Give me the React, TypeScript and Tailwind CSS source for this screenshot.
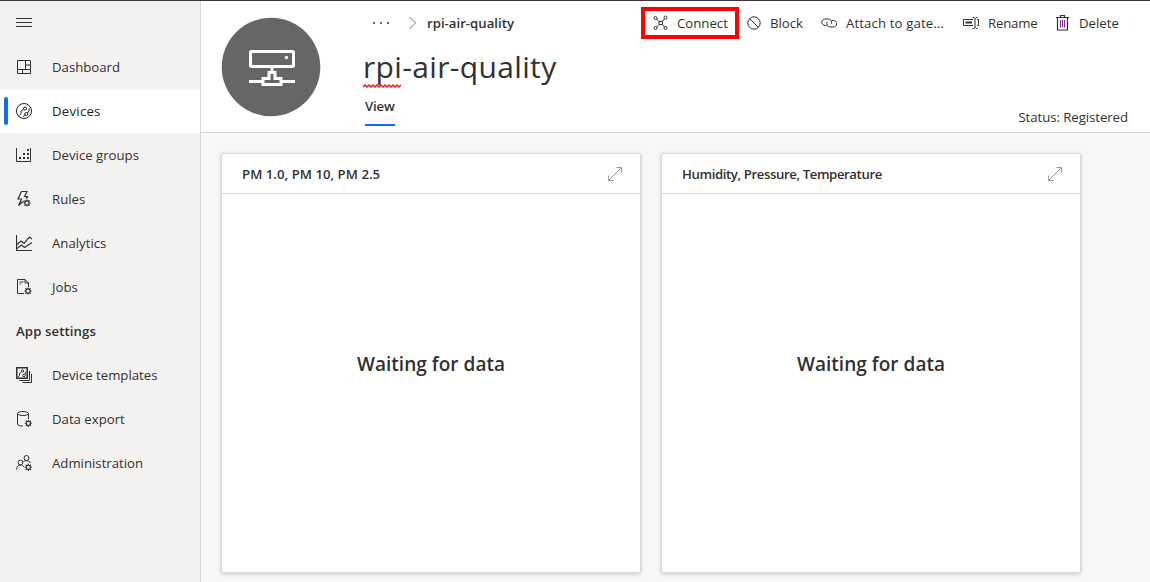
import type { ReactNode } from "react";

function Svg({ children, size = 16, className = "" }: { children: ReactNode; size?: number; className?: string }) {
  return (
    <svg width={size} height={size} viewBox={`0 0 ${size} ${size}`} fill="none" stroke="currentColor" strokeWidth="1" className={`shrink-0 ${className}`}>
      {children}
    </svg>
  );
}

function Gear({ x, y }: { x: number; y: number }) {
  return (
    <g transform={`translate(${x} ${y})`}>
      <circle r="2.1" strokeWidth="1.1" />
      <path d="M0-2.100V-3.600M0 2.100V3.600M-2.100 0H-3.600M2.100 0H3.600M-1.500-1.500l-1.100-1.100M1.500 1.500l1.100 1.100M-1.500 1.500l-1.100 1.100M1.500-1.500l1.100-1.100" strokeWidth="1.1" />
    </g>
  );
}

const icons = {
  menu: <path d="M0 3.5h16M0 7.5h16M0 11.5h16" />,
  dashboard: <path d="M1.500 1.500h13v13h-13zM9.500 1.500v9M1.500 10.500h13M9.500 6h5M6.500 10.500v4" />,
  devices: (
    <>
      <circle cx="8" cy="8" r="7.500" />
      <circle cx="9" cy="5.500" r="1.500" />
      <circle cx="10.300" cy="11" r="1.500" />
      <path d="M7.700 6.300L5 8v2.500L3.500 12.500M11.500 10l1.500-2 .2-2.500M8.800 11.500L7.500 14" />
    </>
  ),
  groups: (
    <>
      <path d="M.5 1v13.500h14V1" />
      <path d="M3 10h2v2H3zM7 10h2v2H7zM11 10h2v2h-2zM7 6h2v2H7zM11 6h2v2h-2zM11 2h2v2h-2z" fill="currentColor" stroke="none" />
    </>
  ),
  rules: (
    <>
      <path d="M5.500.500h5.500L8.500 5.500H12M5.500.500L2 8h3.500L2.500 14.500L7.500 10M12 5.500L10 7.500" strokeWidth="1.200" />
      <Gear x={11} y={12} />
    </>
  ),
  analytics: (
    <>
      <path d="M.5 0v15.500H16" strokeWidth="1.200" />
      <path d="M1 9.500l4-3.500 3 2.500L13.500 2 16 4M1 13.500L5.500 10 8.500 12.500 16 7.500" strokeWidth="1.200" />
    </>
  ),
  jobs: (
    <>
      <path d="M8 14.500H1.500v-14H9L12.500 4v4M9 .5V4h3.500M3.500 3h4M3.500 5h1.500" />
      <Gear x={12} y={12} />
    </>
  ),
  templates: (
    <>
      <path d="M.75.75h10.500v10.500H.75z" strokeWidth="1.500" />
      <path d="M13.500 4v9.500H3.500M15.500 7v8.500H6.500" />
      <circle cx="6.500" cy="4" r="1.200" />
      <circle cx="8" cy="8.500" r="1.300" />
      <path d="M5.500 5L3.500 6.500v2L2 10M9 7.500l1-3" />
    </>
  ),
  export: (
    <>
      <path d="M1.500 2.500c0-2.600 11-2.600 11 0s-11 2.600-11 0zv10.500c0 1.300 2 2 5.500 2M12.500 2.500V8" />
      <Gear x={12.300} y={12.300} />
    </>
  ),
  admin: (
    <>
      <circle cx="10.500" cy="3" r="2.500" />
      <circle cx="4.500" cy="7.500" r="2.400" />
      <path d="M.6 14.500c0-2.800 1.500-4.500 3.900-4.500 1.600 0 2.800.8 3.500 2M7 7.200c.8-1 2-1.600 3.500-1.600 2 0 3.300 1 4 2.400" />
      <Gear x={12.300} y={12.300} />
    </>
  ),
  connect: (
    <>
      <circle cx="2.500" cy="3" r="1.500" />
      <circle cx="12.500" cy="2.500" r="1.500" />
      <circle cx="2.500" cy="13" r="1.500" />
      <circle cx="12.500" cy="13" r="1.500" />
      <path d="M6 6.500h3.500v3H6zM3.500 4L6 6.500M11.500 3.500l-2 3M3.500 12L6 9.500M11.500 12l-2-2.500" />
    </>
  ),
  block: (
    <>
      <circle cx="7" cy="8" r="6.200" />
      <path d="M2.700 3.700l8.600 8.600" />
    </>
  ),
  attach: (
    <path d="M5.500 10.500H4.300C2.200 10.500.8 9 .8 7.200S2.200 4 4.300 4h3c2 0 3.400 1.400 3.400 3.200 0 .7-.3 1.400-.7 1.900M11 5.500h1.200c2.100 0 3.500 1.500 3.500 3.300S14.300 12 12.200 12h-3c-2 0-3.400-1.400-3.400-3.200 0-.7.3-1.400.7-1.900" />
  ),
  rename: (
    <>
      <path d="M10 4.500H.5v6H10M14 4.500h1.500v6H14M9.500 2.500H11l1 1 1-1h1.500M9.500 13.500H11l1-1 1 1h1.500M12 3v10" />
      <path d="M2.500 7.500H9" strokeWidth="2" />
    </>
  ),
  trash: (
    <>
      <path d="M1 2.500h13M5.500 2.500v-2h4v2M2.500 2.500v12.500h10V2.500" strokeWidth="1.200" />
      <path d="M5.500 5v7.500M7.500 5v7.500M9.500 5v7.500" stroke="#7a2b8c" />
    </>
  ),
};

type IconName = keyof typeof icons;

const mainNav: { icon: IconName; label: string; active?: boolean }[] = [
  { icon: "dashboard", label: "Dashboard" },
  { icon: "devices", label: "Devices", active: true },
  { icon: "groups", label: "Device groups" },
  { icon: "rules", label: "Rules" },
  { icon: "analytics", label: "Analytics" },
  { icon: "jobs", label: "Jobs" },
];

const settingsNav: { icon: IconName; label: string; active?: boolean }[] = [
  { icon: "templates", label: "Device templates" },
  { icon: "export", label: "Data export" },
  { icon: "admin", label: "Administration" },
];

function NavItem({ icon, label, active }: { icon: IconName; label: string; active?: boolean }) {
  return (
    <a className={`flex h-11 items-center ${active ? "bg-white font-medium tracking-[0.25px] text-[#201f1e]" : ""}`}>
      <span className={`ml-1 mr-2 h-7 w-1 rounded-sm ${active ? "bg-[#136bfb]" : ""}`} />
      <Svg>{icons[icon]}</Svg>
      <span className="ml-5">{label}</span>
    </a>
  );
}

function Command({ icon, label, className }: { icon: IconName; label: string; className: string }) {
  return (
    <button className={`flex shrink-0 items-center whitespace-nowrap ${className}`}>
      <Svg>{icons[icon]}</Svg>
      <span>{label}</span>
    </button>
  );
}

function Tile({ title, titleClass }: { title: string; titleClass: string }) {
  return (
    <section className="flex h-[420px] w-[420px] shrink-0 flex-col rounded-xs border border-[#d6d8d8] bg-white shadow-[0_1px_4px_rgba(0,0,0,0.18)]">
      <header className="flex h-10 shrink-0 items-center justify-between border-b border-[#d6d8d8] pl-5 pr-[17px]">
        <h2 className={`font-semibold ${titleClass}`}>{title}</h2>
        <Svg className="text-[#999]">
          <path d="M1.500 14.500l13-13M9.500 1.500h5v5M1.500 9.500v5h5" />
        </Svg>
      </header>
      <div className="flex flex-1 items-center justify-center pb-[38px] text-[19px] font-semibold tracking-[0.03px]">
        Waiting for data
      </div>
    </section>
  );
}

export default function App() {
  return (
    <div className="flex h-[582px] w-[1150px] overflow-hidden border-t border-[#3b383d] bg-[#f7f7f7] font-['Open_Sans','Noto_Sans',sans-serif] text-[13.2px] leading-5 text-[#323130]">
      <nav className="w-[201px] shrink-0 border-r border-[#d6d8d8] bg-[#f3f2f1]">
        <div className="flex h-11 items-center pl-4">
          <Svg>{icons.menu}</Svg>
        </div>
        {mainNav.map((item) => (
          <NavItem key={item.label} {...item} />
        ))}
        <div className="flex h-11 items-center pl-4 font-semibold tracking-[0.1px]">App settings</div>
        {settingsNav.map((item) => (
          <NavItem key={item.label} {...item} />
        ))}
      </nav>

      <main className="flex min-w-0 flex-1 flex-col">
        <header className="flex h-[132px] shrink-0 border-b border-[#d6d8d8] bg-white pl-5">
          <svg className="mt-4 shrink-0" width="100" height="100" viewBox="0 0 100 100" fill="none" stroke="white" strokeWidth="3">
            <circle cx="50" cy="50" r="49.300" fill="#666" stroke="none" />
            <rect x="29.500" y="34.500" width="43" height="15" rx="1" />
            <path d="M51 50v5M28 64.500h13.500M60.500 64.500H74M48 55.500h6v6h6v6H42v-6h6z" />
            <circle cx="65.500" cy="40.500" r="1.700" fill="white" stroke="none" />
          </svg>

          <div className="ml-11 flex w-[276px] shrink-0 flex-col">
            <div className="flex h-11 items-center pl-2">
              <svg width="16" height="4" viewBox="0 0 16 4" fill="#666">
                <path d="M0 1h2v2H0zM7 1h2v2H7zM14 1h2v2h-2z" />
              </svg>
              <Svg className="ml-[18px] text-[#777]">
                <path d="M2.500 2l6 6-6 6" />
              </Svg>
              <span className="ml-1 font-semibold">rpi-air-quality</span>
            </div>
            <h1 className="relative -ml-[2px] -mt-px h-[46px] text-[30px] leading-[46px] tracking-[0.35px]">
              rpi-air-quality
              <svg className="absolute left-0 top-[40px]" width="38" height="4" viewBox="0 0 38 4" fill="none" stroke="#ed1c24" strokeWidth="1.500">
                <path d="M0 3l2-2 2 2 2-2 2 2 2-2 2 2 2-2 2 2 2-2 2 2 2-2 2 2 2-2 2 2 2-2 2 2 2-2 2 2 2-2" />
              </svg>
            </h1>
            <div className="mt-[6px] h-[30px] w-[30px] border-b-2 border-[#136bfb] font-semibold tracking-[-0.2px]">View</div>
          </div>

          <div className="flex min-w-0 flex-1 flex-col justify-between">
            <div className="flex pt-[6px]">
              <Command icon="connect" label="Connect" className="h-8 w-[98px] gap-2 border-4 border-[#fe0000] pl-2" />
              <Command icon="block" label="Block" className="ml-2 w-[74px] gap-[7px]" />
              <Command icon="attach" label="Attach to gate..." className="w-[142px] gap-[9px] tracking-[0.12px]" />
              <Command icon="rename" label="Rename" className="w-[92px] gap-[9px] tracking-[-0.2px]" />
              <Command icon="trash" label="Delete" className="gap-2" />
            </div>
            <div className="pb-[5px] pr-[22px] text-right tracking-[-0.05px]">Status: Registered</div>
          </div>
        </header>

        <div className="flex gap-5 pl-5 pt-5">
          <Tile title="PM 1.0, PM 10, PM 2.5" titleClass="tracking-[0.03px]" />
          <Tile title="Humidity, Pressure, Temperature" titleClass="tracking-[-0.4px]" />
        </div>
      </main>
    </div>
  );
}
